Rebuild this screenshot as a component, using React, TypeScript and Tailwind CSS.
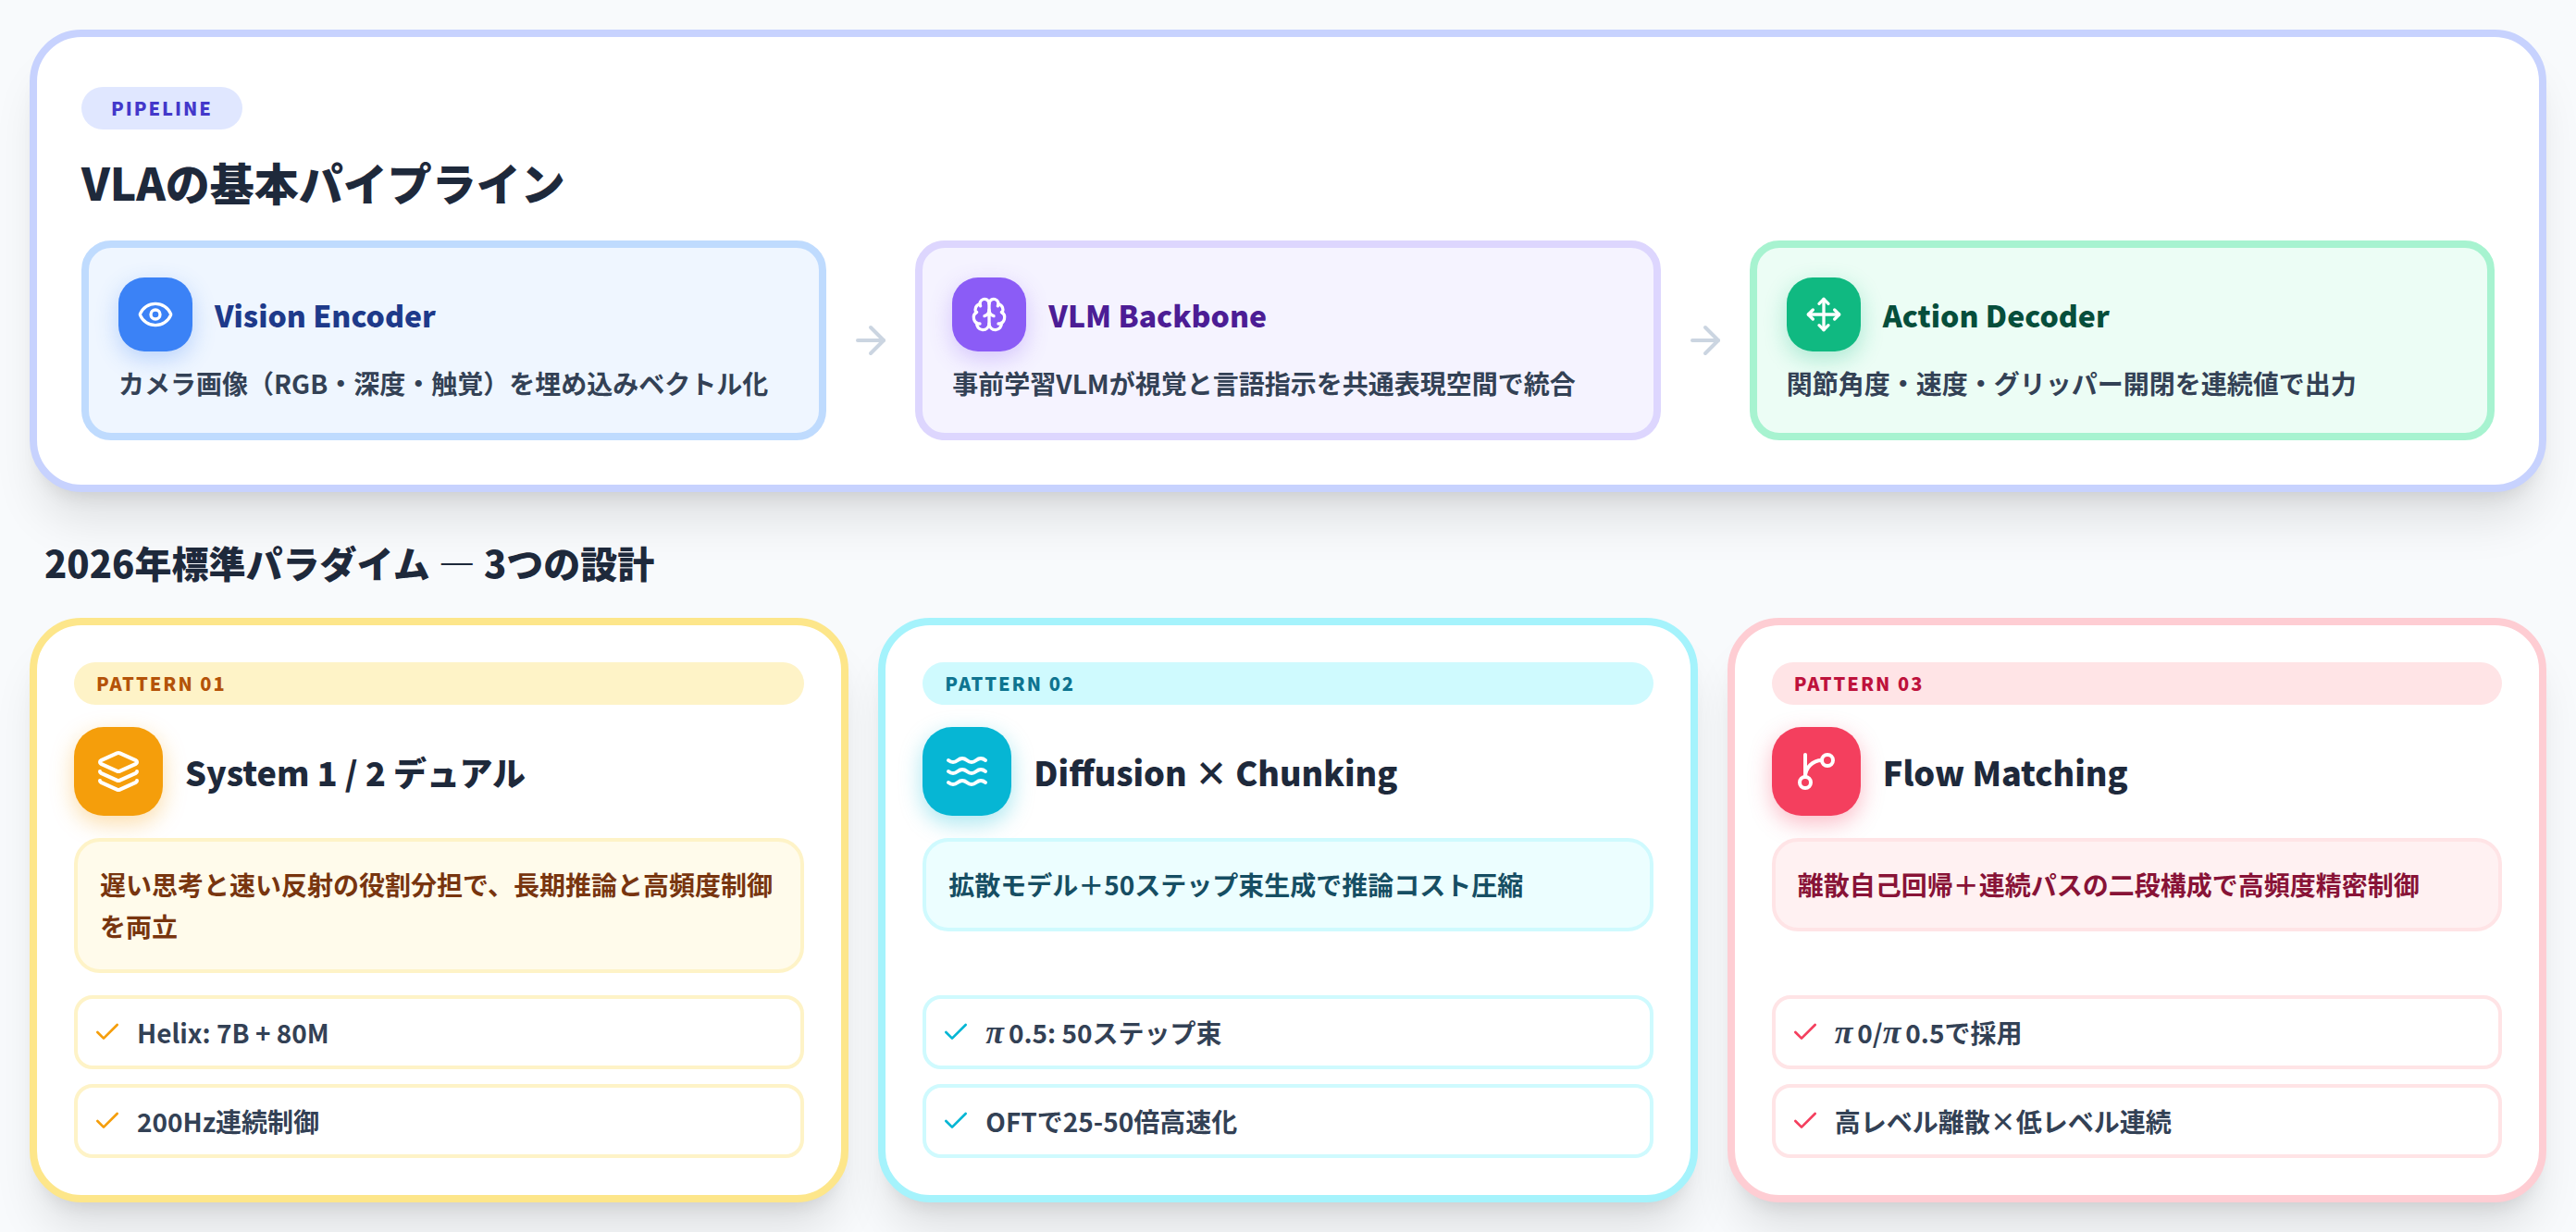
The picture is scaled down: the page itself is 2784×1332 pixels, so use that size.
import { ArrowRight, Brain, Check, Eye, Layers, Move, Waves } from "lucide-react";

const FlowIcon = ({ size }: { size: number }) => (
  <svg
    width={size}
    height={size}
    viewBox="0 0 24 24"
    fill="none"
    stroke="currentColor"
    strokeWidth="2"
    strokeLinecap="round"
    strokeLinejoin="round"
  >
    <line x1="6" y1="3" x2="6" y2="15" />
    <circle cx="18" cy="6" r="3" />
    <circle cx="6" cy="18" r="3" />
    <path d="M15 6a9 9 0 0 0-9 9" />
  </svg>
);

const steps = [
  {
    title: "Vision Encoder",
    desc: "カメラ画像（RGB・深度・触覚）を埋め込みベクトル化",
    Icon: Eye,
    card: "border-[#bfdbfe] bg-[#eff6ff]",
    icon: "bg-[#3b82f6] shadow-[0_8px_24px_rgba(59,130,246,0.3)]",
    heading: "text-[#1e3a8a]",
  },
  {
    title: "VLM Backbone",
    desc: "事前学習VLMが視覚と言語指示を共通表現空間で統合",
    Icon: Brain,
    card: "border-[#ddd6fe] bg-[#f5f3ff]",
    icon: "bg-[#8b5cf6] shadow-[0_8px_24px_rgba(139,92,246,0.3)]",
    heading: "text-[#4c1d95]",
  },
  {
    title: "Action Decoder",
    desc: "関節角度・速度・グリッパー開閉を連続値で出力",
    Icon: Move,
    card: "border-[#a7f3d0] bg-[#ecfdf5]",
    icon: "bg-[#10b981] shadow-[0_8px_24px_rgba(16,185,129,0.3)]",
    heading: "text-[#064e3b]",
  },
];

const patterns = [
  {
    tag: "PATTERN 01",
    title: "System 1 / 2 デュアル",
    note: "遅い思考と速い反射の役割分担で、長期推論と高頻度制御を両立",
    items: ["Helix: 7B + 80M", "200Hz連続制御"],
    Icon: Layers,
    card: "border-[#fde68a]",
    pill: "bg-[#fef3c7] text-[#b45309]",
    icon: "bg-[#f59e0b] shadow-[0_8px_24px_rgba(245,158,11,0.35)]",
    noteBox: "border-[#fef3c7] bg-[#fffbeb] text-[#78350f]",
    item: "border-[#fef3c7]",
    check: "text-[#f59e0b]",
  },
  {
    tag: "PATTERN 02",
    title: "Diffusion × Chunking",
    note: "拡散モデル＋50ステップ束生成で推論コスト圧縮",
    items: ["π0.5: 50ステップ束", "OFTで25-50倍高速化"],
    Icon: Waves,
    card: "border-[#a5f3fc]",
    pill: "bg-[#cffafe] text-[#0e7490]",
    icon: "bg-[#06b6d4] shadow-[0_8px_24px_rgba(6,182,212,0.35)]",
    noteBox: "border-[#cffafe] bg-[#ecfeff] text-[#164e63]",
    item: "border-[#cffafe]",
    check: "text-[#06b6d4]",
  },
  {
    tag: "PATTERN 03",
    title: "Flow Matching",
    note: "離散自己回帰＋連続パスの二段構成で高頻度精密制御",
    items: ["π0/π0.5で採用", "高レベル離散×低レベル連続"],
    Icon: FlowIcon,
    card: "border-[#fecdd3]",
    pill: "bg-[#ffe4e6] text-[#be123c]",
    icon: "bg-[#f43f5e] shadow-[0_8px_24px_rgba(244,63,94,0.35)]",
    noteBox: "border-[#ffe4e6] bg-[#fff1f2] text-[#881337]",
    item: "border-[#ffe4e6]",
    check: "text-[#f43f5e]",
  },
];

// the π in the picture comes from a serif fallback
const withPi = (text: string) =>
  text.split(/(π)/).map((part, i) =>
    part === "π" ? (
      <span key={i} className="mr-[5px] font-['Liberation_Serif',serif] text-[36px] leading-none italic">
        π
      </span>
    ) : (
      part
    ),
  );

export default function App() {
  return (
    <div className="min-h-screen bg-[#f8fafc] p-8 font-['Noto_Sans_CJK_JP',sans-serif]">
      {/* Pipeline */}
      <section className="rounded-[56px] border-8 border-[#c7d2fe] bg-white p-12 shadow-[0_40px_50px_-10px_rgba(0,0,0,0.1),0_16px_20px_-12px_rgba(0,0,0,0.1)]">
        <div className="mt-[6px] flex h-[46px] w-[174px] items-center justify-center rounded-full bg-[#e0e7ff] text-[20px] font-black tracking-[0.1em] text-[#4338ca]">
          PIPELINE
        </div>
        <h1 className="mt-6 mb-8 text-[48px] leading-[64px] font-black text-[#1e293b]">
          VLAの基本パイプライン
        </h1>
        <div className="flex items-center">
          {steps.map((step, i) => (
            <div key={step.title} className="contents">
              {i > 0 && (
                <ArrowRight className="mx-6 shrink-0 text-[#cbd5e1]" size={48} />
              )}
              <div className={`flex-1 rounded-[32px] border-8 p-8 ${step.card}`}>
                <div className="flex items-center gap-6">
                  <div className={`flex h-20 w-20 shrink-0 items-center justify-center rounded-[28px] text-white ${step.icon}`}>
                    <step.Icon size={40} />
                  </div>
                  <h3 className={`text-[32px] font-black ${step.heading}`}>{step.title}</h3>
                </div>
                <p className="mt-3 text-[28px] leading-[44px] font-bold text-[#334155]">{step.desc}</p>
              </div>
            </div>
          ))}
        </div>
      </section>

      <h2 className="mt-12 mb-8 pl-4 text-[40px] leading-[56px] font-black text-[#1e293b]">
        2026年標準パラダイム ― 3つの設計
      </h2>

      {/* Patterns */}
      <div className="grid grid-cols-3 gap-8">
        {patterns.map((p) => (
          <div
            key={p.tag}
            className={`flex flex-col rounded-[56px] border-8 bg-white p-10 shadow-[0_40px_50px_-10px_rgba(0,0,0,0.1),0_16px_20px_-12px_rgba(0,0,0,0.1)] ${p.card}`}
          >
            <div className={`flex h-[46px] items-center rounded-full px-6 text-[20px] font-black tracking-[0.1em] ${p.pill}`}>
              {p.tag}
            </div>
            <div className="mt-6 flex items-center gap-6">
              <div className={`flex h-24 w-24 shrink-0 items-center justify-center rounded-[32px] text-white ${p.icon}`}>
                <p.Icon size={48} />
              </div>
              <h3 className="text-[36px] font-black text-[#1e293b]">{p.title}</h3>
            </div>
            <p className={`mt-6 mb-6 rounded-[28px] border-4 px-6 py-6 text-[28px] leading-[45px] font-bold ${p.noteBox}`}>
              {p.note}
            </p>
            <div className="mt-auto space-y-4">
              {p.items.map((item) => (
                <div key={item} className={`flex h-20 items-center gap-4 rounded-[20px] border-4 px-4 ${p.item}`}>
                  <Check className={`shrink-0 ${p.check}`} size={32} />
                  <span className="text-[28px] font-bold text-[#334155]">{withPi(item)}</span>
                </div>
              ))}
            </div>
          </div>
        ))}
      </div>
    </div>
  );
}
